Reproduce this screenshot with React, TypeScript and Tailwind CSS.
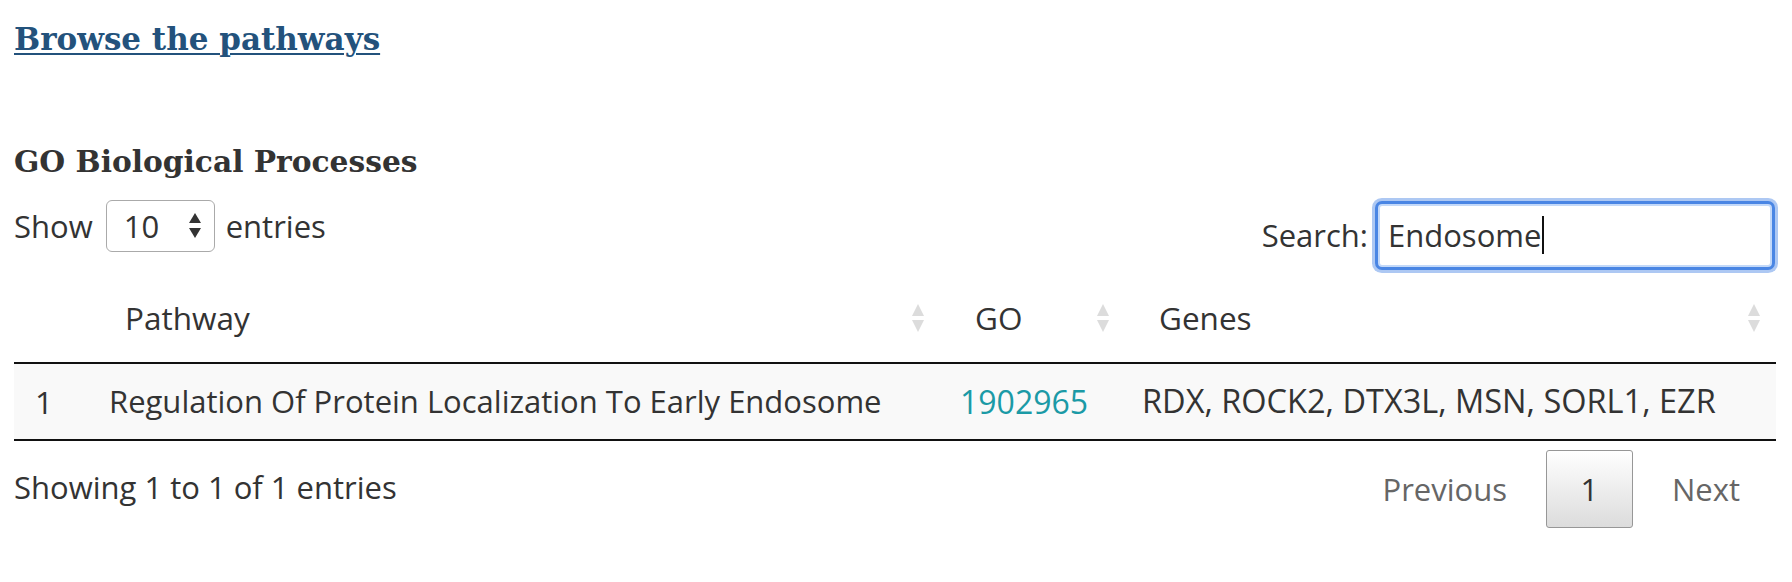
import React from "react";

const SortIcon = () => (
  <svg width="16" height="30" viewBox="0 0 16 30" className="shrink-0">
    <polygon points="8,1 14,13 2,13" fill="#dcdcdc" />
    <polygon points="2,17 14,17 8,29" fill="#dcdcdc" />
  </svg>
);

const SelectArrows = () => (
  <svg width="14" height="28" viewBox="0 0 14 28">
    <polygon points="7,1 13,11 1,11" fill="#333" />
    <polygon points="1,16 13,16 7,26" fill="#333" />
  </svg>
);

export default function App() {
  return (
    <div className="w-[1792px] h-[582px] bg-white pl-[14px] pr-[16px] text-[#333] font-['Open_Sans',sans-serif] overflow-hidden">
      <div className="h-[78px] flex items-center">
        <a
          href="#"
          className="font-['DejaVu_Serif',serif] font-bold text-[31px] text-[#23527c] underline decoration-[2px] underline-offset-[3px]"
        >
          Browse the pathways
        </a>
      </div>

      <div className="mt-[62px] h-[44px] flex items-center">
        <h3 className="font-['DejaVu_Serif',serif] font-bold text-[29.7px] text-[#333]">
          GO Biological Processes
        </h3>
      </div>

      <div className="mt-[16px] flex justify-between items-start text-[31px]">
        <div className="h-[52px] flex items-center gap-[11px]">
          <span>Show</span>
          <div className="ml-[2px] w-[109px] h-[52px] border border-[#aaa] rounded-[6px] bg-white flex items-center justify-between pl-[17px] pr-[12px]">
            <span>10</span>
            <SelectArrows />
          </div>
          <span>entries</span>
        </div>

        <div className="h-[70px] flex items-center mr-[4px]">
          <span>Search:</span>
          <div className="ml-[10px] w-[394px] h-[63px] rounded-[4px] border-2 border-[#c3d9f9] outline-[3px] outline-solid outline-[#4a86e4] shadow-[0_0_0_6px_rgba(74,134,228,0.45)] bg-white flex items-center pl-[8px]">
            <span>Endosome</span>
            <span className="w-[2px] h-[38px] bg-[#111] ml-[1px]" />
          </div>
        </div>
      </div>

      <div className="mt-[4px] text-[31.5px]">
        <div className="grid grid-cols-[74px_851px_182px_655px] h-[90px] border-b-2 border-[#111] items-center">
          <div />
          <div className="flex items-center justify-between pl-[37px] pr-[13px]">
            <span>Pathway</span>
            <SortIcon />
          </div>
          <div className="flex items-center justify-between pl-[36px] pr-[10px]">
            <span>GO</span>
            <SortIcon />
          </div>
          <div className="flex items-center justify-between pl-[38px] pr-[14px]">
            <span>Genes</span>
            <SortIcon />
          </div>
        </div>
        <div className="grid grid-cols-[74px_851px_182px_655px] h-[77px] border-b-2 border-[#111] bg-[#f9f9f9] items-center">
          <div className="pl-[21px]">1</div>
          <div className="pl-[21px] whitespace-nowrap text-[31px]">Regulation Of Protein Localization To Early Endosome</div>
          <div className="pl-[21px] text-[32px]">
            <a href="#" className="text-[#1b9aa6]">1902965</a>
          </div>
          <div className="pl-[21px] whitespace-nowrap text-[32.5px]">RDX, ROCK2, DTX3L, MSN, SORL1, EZR</div>
        </div>
      </div>

      <div className="mt-[9px] h-[78px] flex items-center justify-between text-[31px]">
        <span className="-mt-[3px]">Showing 1 to 1 of 1 entries</span>
        <div className="flex items-center pr-[36px]">
          <span className="text-[#666]">Previous</span>
          <div className="ml-[39px] w-[87px] h-[78px] border border-[#979797] rounded-[3px] bg-gradient-to-b from-white to-[#dcdcdc] flex items-center justify-center text-[#333]">
            1
          </div>
          <span className="ml-[39px] text-[#666]">Next</span>
        </div>
      </div>
    </div>
  );
}
